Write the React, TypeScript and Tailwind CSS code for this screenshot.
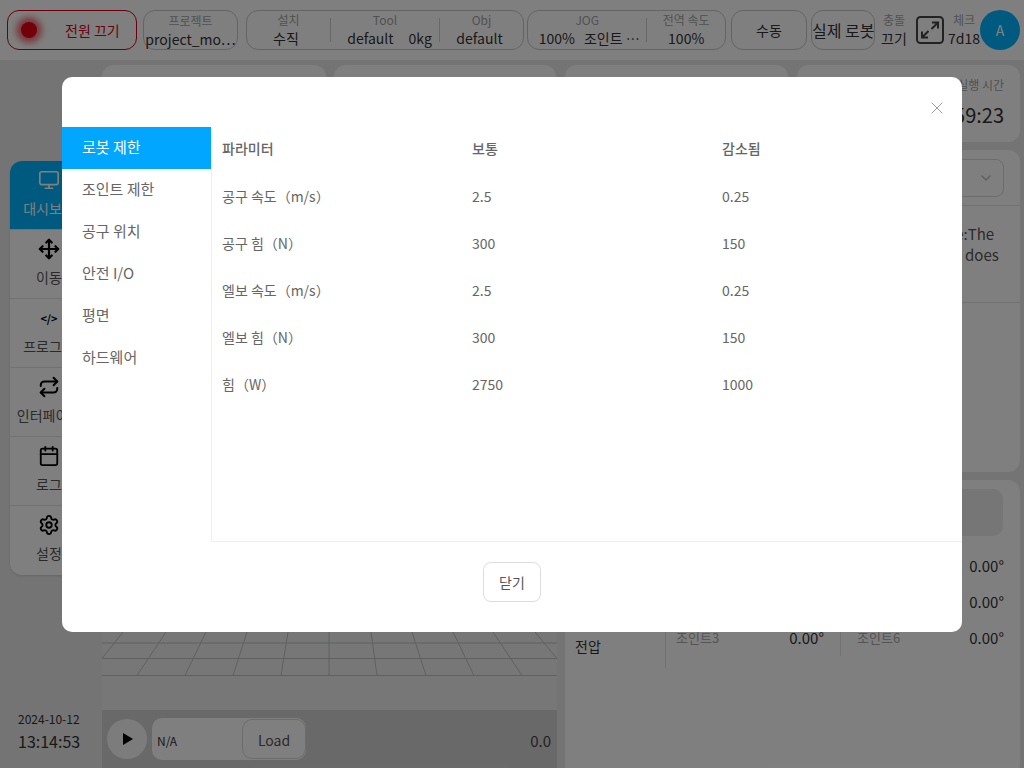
import { Calendar, ChevronDown, Monitor, Move, Repeat, Settings, X } from "lucide-react";

const font = { fontFamily: '"Noto Sans CJK KR", "Noto Sans", sans-serif' };

const navItems = [
  { label: "대시보드", icon: <Monitor className="h-[22px] w-[22px]" strokeWidth={1.8} />, active: true },
  { label: "이동", icon: <Move className="h-[22px] w-[22px]" strokeWidth={2.4} /> },
  { label: "프로그램", icon: <span className="text-[11px] font-bold leading-[22px]">&lt;/&gt;</span> },
  { label: "인터페이스", icon: <Repeat className="h-[22px] w-[22px]" strokeWidth={2.2} /> },
  { label: "로그", icon: <Calendar className="h-[22px] w-[22px]" strokeWidth={2} /> },
  { label: "설정", icon: <Settings className="h-[22px] w-[22px]" strokeWidth={2} /> },
];

const menuItems = ["로봇 제한", "조인트 제한", "공구 위치", "안전 I/O", "평면", "하드웨어"];

const limits = [
  ["공구 속도（m/s）", "2.5", "0.25"],
  ["공구 힘（N）", "300", "150"],
  ["엘보 속도（m/s）", "2.5", "0.25"],
  ["엘보 힘（N）", "300", "150"],
  ["힘（W）", "2750", "1000"],
];

const spokes = [
  [137, 166], [185, 206], [233, 247], [281, 288], [329, 329],
  [377, 371], [426, 412], [474, 453], [522, 493],
];

function Field({
  label,
  value,
  className = "",
  valueClassName = "",
}: {
  label: string;
  value: string;
  className?: string;
  valueClassName?: string;
}) {
  return (
    <div className={`flex flex-col items-center ${className}`}>
      <span className="text-[12px] leading-[16px] text-[#a3a3a3]">{label}</span>
      <span className={`whitespace-nowrap text-[14px] leading-[20px] text-[#333] ${valueClassName}`}>{value}</span>
    </div>
  );
}

function Divider() {
  return <div className="h-[24px] w-px bg-[#d0d0d0]" />;
}

function Header() {
  return (
    <header className="flex h-[60px] shrink-0 items-center bg-white pl-[7px] pr-[4px]">
      <button className="flex h-[40px] w-[130px] items-center rounded-[12px] border border-[#d0021b] pl-[13px]">
        <span className="h-[16px] w-[16px] rounded-full bg-[#e60012] shadow-[0_0_6px_5px_rgba(230,0,18,0.55)]" />
        <span className="ml-[28px] text-[14px] text-[#d0021b]">전원 끄기</span>
      </button>
      <div className="ml-[6px] flex h-[40px] w-[95px] flex-col items-center rounded-[12px] border border-[#c8c8c8] pt-[2px]">
        <Field label="프로젝트" value="project_mo⋯" />
      </div>
      <div className="ml-[8px] flex h-[40px] w-[278px] items-center rounded-[12px] border border-[#c8c8c8]">
        <Field label="설치" value="수직" className="w-[83px]" valueClassName="pr-[5px]" />
        <Divider />
        <div className="flex w-[108px] flex-col items-center">
          <span className="text-[12px] leading-[16px] text-[#a3a3a3]">Tool</span>
          <span className="flex gap-[15px] pl-[9px] text-[14px] leading-[20px] text-[#333]">
            <span>default</span>
            <span>0kg</span>
          </span>
        </div>
        <Divider />
        <Field label="Obj" value="default" className="w-[83px]" valueClassName="pr-[4px]" />
      </div>
      <div className="ml-[3px] flex h-[40px] w-[199px] items-center rounded-[12px] border border-[#c8c8c8]">
        <div className="flex w-[119px] flex-col items-center">
          <span className="text-[12px] leading-[16px] text-[#a3a3a3]">JOG</span>
          <span className="flex gap-[9px] whitespace-nowrap pl-[4px] text-[14px] leading-[20px] text-[#333]">
            <span>100%</span>
            <span>조인트 ⋯</span>
          </span>
        </div>
        <Divider />
        <Field label="전역 속도" value="100%" className="w-[78px]" />
      </div>
      <button className="ml-[5px] h-[40px] w-[76px] rounded-[12px] border border-[#c8c8c8] text-[14px] text-[#333]">수동</button>
      <button className="ml-[4px] h-[40px] w-[64px] whitespace-nowrap rounded-[12px] border border-[#c8c8c8] text-[16px] text-[#333]">실제 로봇</button>
      <Field label="충돌" value="끄기" className="ml-[5px] w-[28px]" />
      <svg className="ml-[8px] h-[28px] w-[28px] text-[#444]" viewBox="0 0 28 28" fill="none" stroke="currentColor" strokeWidth="2">
        <rect x="1" y="1" width="26" height="26" rx="3.5" />
        <path d="M16 6.5h6v6M22 6.5l-6.5 6.5M12 21.5H6v-6M6 21.5l6.5-6.5" />
      </svg>
      <Field label="체크" value="7d18" className="ml-[4px] w-[32px]" />
      <div className="flex h-[40px] w-[40px] items-center justify-center rounded-full bg-[#00b4ff] text-[14px] text-white">A</div>
    </header>
  );
}

function Sidebar() {
  return (
    <aside className="flex w-[102px] shrink-0 flex-col pl-[10px]">
      <nav className="mt-[101px] w-[78px] overflow-hidden rounded-[12px] bg-white shadow-sm">
        {navItems.map((item) => (
          <div
            key={item.label}
            className={`flex h-[69px] flex-col items-center whitespace-nowrap border-b border-[#e5e5e5] pt-[8px] last:border-b-0 ${
              item.active ? "bg-[#00b4ff] text-white" : "text-black"
            }`}
          >
            {item.icon}
            <span className={`mt-[7px] text-[14px] leading-[20px] ${item.active ? "text-white" : "text-[#555]"}`}>{item.label}</span>
          </div>
        ))}
      </nav>
      <div className="mt-auto mb-[15px] ml-[8px] flex flex-col text-[#333]">
        <span className="text-[12px] leading-[18px]">2024-10-12</span>
        <span className="mt-[1px] text-[16px] leading-[24px]">13:14:53</span>
      </div>
    </aside>
  );
}

function Viewer() {
  return (
    <section className="flex min-h-0 w-[455px] shrink-0 flex-col justify-end rounded-t-[12px] bg-[#eeeff1]">
      <svg className="h-[44px] w-[455px]" viewBox="102 632 455 44" fill="none" stroke="#c0c0c0" strokeWidth="1">
        <path d="M102 643h455M102 658.5h455M102 675.5h455M102 658.5L123 632M557 658.5L535 632" />
        {spokes.map(([bottom, top]) => (
          <line key={bottom} x1={bottom} y1={675.5} x2={top} y2={632} />
        ))}
      </svg>
      <div className="h-[34px]" />
      <div className="flex h-[58px] items-center bg-[#d3d3d4] pl-[5px] pr-[6px]">
        <div className="flex h-[40px] w-[40px] items-center justify-center rounded-full bg-[#f8f8f8]">
          <svg className="ml-px h-[14px] w-[12px]" viewBox="0 0 12 14"><path d="M1 1v12l10-6z" fill="black" /></svg>
        </div>
        <div className="ml-[5px] flex h-[42px] w-[154px] items-center justify-between rounded-[10px] bg-white pl-[5px]">
          <span className="pt-[4px] text-[12px] text-[#333]">N/A</span>
          <button className="h-[40px] w-[64px] rounded-[10px] border border-[#d8d8d8] pt-[2px] text-[14px] text-[#555]">Load</button>
        </div>
        <span className="ml-auto pt-[4px] text-[15px] text-[#444]">0.0</span>
      </div>
    </section>
  );
}

function JointRow({ name, value }: { name: string; value: string }) {
  return (
    <div className="flex h-[36px] items-center justify-between">
      <span className="text-[13px] text-[#aaa]">{name}</span>
      <span className="text-[15px] text-[#333]">{value}</span>
    </div>
  );
}

function RightColumn() {
  return (
    <div className="flex w-[455px] flex-col gap-[8px]">
      <section className="flex h-[322px] flex-col rounded-[12px] bg-white">
        <div className="flex h-[56px] items-start justify-end border-b border-[#e5e5e5] pr-[16px] pt-[9px]">
          <div className="flex h-[38px] w-[200px] items-center justify-end rounded-[8px] border border-[#d8d8d8] pr-[9px]">
            <ChevronDown className="h-[16px] w-[16px] text-[#bbb]" />
          </div>
        </div>
        <div className="flex h-[97px] justify-end border-b border-[#e5e5e5] pr-[16px] pt-[17px] text-[15px] leading-[21px] text-[#555]">
          <p className="w-[100px] whitespace-nowrap">
            Message:The
            <br />
            A device does
          </p>
        </div>
      </section>
      <section className="flex-1 rounded-t-[12px] bg-white px-[10px] pt-[9px]">
        <div className="mr-[7px] h-[47px] rounded-[10px] bg-[#ececec]" />
        <div className="mt-[12px] flex items-start">
          <div className="flex h-[108px] w-[90px] items-end text-[14px] leading-[20px] text-[#333]">전압</div>
          <div className="w-[175px] border-l border-[#e5e5e5] pb-[12px] pl-[10px] pr-[16px]">
            <JointRow name="조인트1" value="0.00°" />
            <JointRow name="조인트2" value="0.00°" />
            <JointRow name="조인트3" value="0.00°" />
          </div>
          <div className="w-[165px] border-l border-[#e5e5e5] pl-[16px] pr-[1px]">
            <JointRow name="조인트4" value="0.00°" />
            <JointRow name="조인트5" value="0.00°" />
            <JointRow name="조인트6" value="0.00°" />
          </div>
        </div>
      </section>
    </div>
  );
}

function Main() {
  return (
    <main className="flex min-h-0 flex-1 flex-col pr-[4px] pt-[5px]">
      <div className="flex h-[77px]">
        <div className="w-[224px] rounded-[12px] bg-white" />
        <div className="ml-[8px] w-[222px] rounded-[12px] bg-white" />
        <div className="ml-[9px] w-[223px] rounded-[12px] bg-white" />
        <div className="ml-[9px] flex w-[223px] flex-col items-end rounded-[12px] bg-white pr-[16px] pt-[11px]">
          <span className="text-[12px] leading-[18px] text-[#a3a3a3]">실행 시간</span>
          <span className="mt-[6px] text-[20px] leading-[30px] text-[#333]">59:23</span>
        </div>
      </div>
      <div className="mt-[8px] flex min-h-0 flex-1 gap-[8px]">
        <Viewer />
        <RightColumn />
      </div>
    </main>
  );
}

function LimitsDialog() {
  return (
    <div className="absolute inset-0 bg-black/50">
      <div className="absolute left-[62px] top-[77px] flex h-[555px] w-[900px] flex-col rounded-[10px] bg-white">
        <div className="flex h-[50px] shrink-0 items-end justify-end pr-[15px] pb-[9px]">
          <X className="h-[20px] w-[20px] text-[#888]" strokeWidth={1} />
        </div>
        <div className="flex h-[415px] shrink-0">
          <ul className="w-[150px] shrink-0 border-r border-[#eeeeee] text-[15px] text-[#666]">
            {menuItems.map((item, i) => (
              <li
                key={item}
                className={`flex h-[42px] items-center pb-[2px] pl-[20px] ${i === 0 ? "bg-[#00a6ff] text-white" : ""}`}
              >
                {item}
              </li>
            ))}
          </ul>
          <div className="flex-1 border-b border-[#eeeeee] pl-[10px] text-[14px] text-[#666]">
            <div className="grid h-[46px] grid-cols-[250px_250px_1fr] items-center pb-[3px] font-medium">
              <span>파라미터</span>
              <span>보통</span>
              <span>감소됨</span>
            </div>
            {limits.map(([name, normal, reduced]) => (
              <div key={name} className="grid h-[47px] grid-cols-[250px_250px_1fr] items-center">
                <span>{name}</span>
                <span>{normal}</span>
                <span>{reduced}</span>
              </div>
            ))}
          </div>
        </div>
        <div className="flex flex-1 items-start justify-center pt-[20px]">
          <button className="h-[40px] w-[58px] rounded-[8px] border border-[#dddddd] text-[14px] text-[#555]">닫기</button>
        </div>
      </div>
    </div>
  );
}

export default function App() {
  return (
    <div className="relative flex h-[768px] w-[1024px] flex-col overflow-hidden bg-[#e9e9e9]" style={font}>
      <Header />
      <div className="flex min-h-0 flex-1">
        <Sidebar />
        <Main />
      </div>
      <LimitsDialog />
    </div>
  );
}
